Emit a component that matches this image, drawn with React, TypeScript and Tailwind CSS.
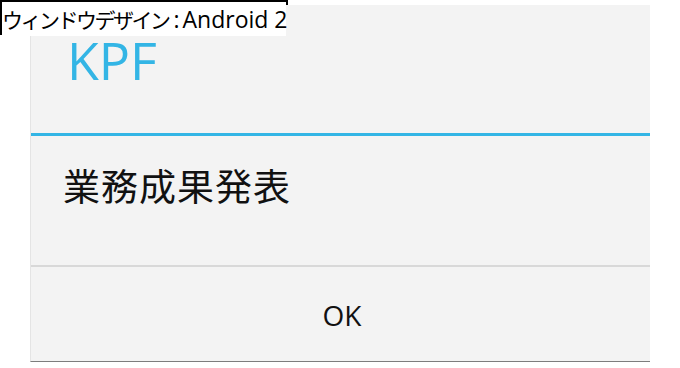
import React from "react";

export default function App() {
  return (
    <div className="relative w-[680px] h-[368px] bg-white overflow-hidden pt-[5px] pl-[30px]">
      {/* label frame (under dialog) */}
      <div className="absolute left-0 top-0 w-[288px] h-[35px] border-2 border-black" />

      {/* dialog */}
      <div className="relative w-[620px] h-[357px] bg-[#f3f3f3] border-l border-l-[#e4e4e4] border-b border-b-[#7d7d7d] flex flex-col">
        <div className="h-[128px] pt-[29px] pl-[36px]">
          <div className="text-[52px] leading-none text-[#33b5e5] font-['Open_Sans',sans-serif]">KPF</div>
        </div>
        <div className="h-[3px] bg-[#33b5e5]" />
        <div className="h-[129px] pt-[31px] pl-[32px]">
          <div className="text-[37px] leading-none tracking-[1px] text-[#111] font-['Noto_Sans_CJK_JP',sans-serif]">業務成果発表</div>
        </div>
        <div className="h-[2px] bg-[#d8d8d8]" />
        <div className="flex-1 flex items-center justify-center pt-[1px] pl-[3px]">
          <span className="text-[28px] leading-none text-[#111] font-['Open_Sans',sans-serif]">OK</span>
        </div>
      </div>

      {/* label text (over dialog) */}
      <div className="absolute left-[2px] top-[2px] w-[284px] h-[34px] bg-white pt-[6px] text-[23px] leading-none text-black font-['Open_Sans','Noto_Sans_CJK_JP',sans-serif] whitespace-nowrap">
        <span className="text-[21px] tracking-[-2.5px] font-['Noto_Sans_CJK_JP',sans-serif]">ウィンドウデザイン</span>
        <span className="pl-[5px] pr-[3px]">:</span>
        <span>Android 2</span>
      </div>
    </div>
  );
}
